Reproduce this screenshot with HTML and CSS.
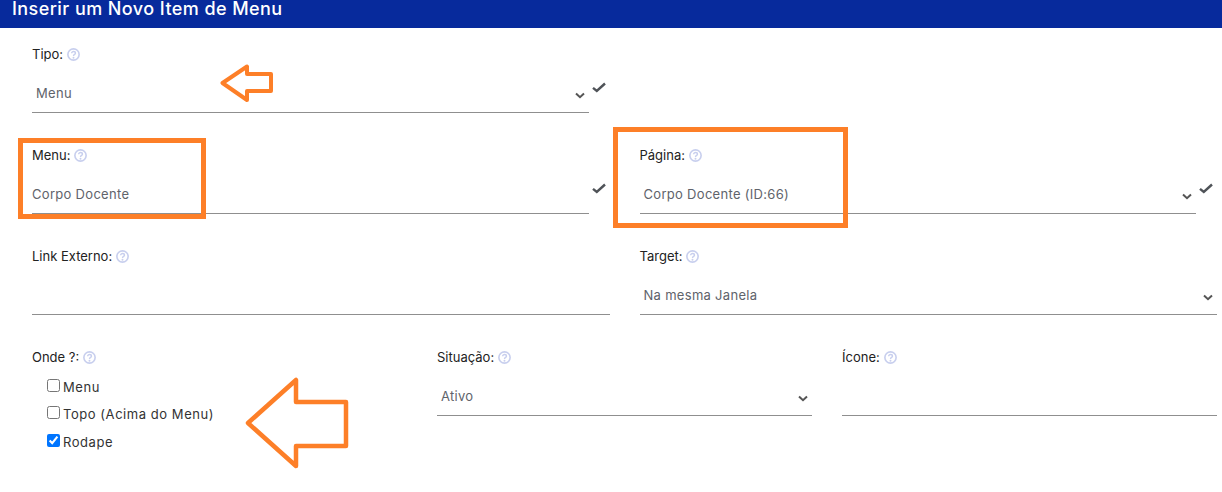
FILE: index.html
```html
<!DOCTYPE html>
<html lang="pt">
<head>
<meta charset="utf-8">
<title>Inserir um Novo Item de Menu</title>
<link rel="stylesheet" href="styles.css">
</head>
<body>
<svg class="defs" width="0" height="0" aria-hidden="true">
  <symbol id="help" viewBox="0 0 12 12">
    <circle cx="6" cy="6" r="5.2" fill="none" stroke="#c8cfee" stroke-width="1.5"/>
    <path d="M4.3 4.8C4.3 2.8 7.8 2.8 7.8 4.8C7.8 6 6 5.9 6 7.3" fill="none" stroke="#c8cfee" stroke-width="1.3"/>
    <circle cx="6" cy="9" r=".9" fill="#c8cfee"/>
  </symbol>
  <symbol id="chev" viewBox="0 0 10 7">
    <path d="M1 1.5L5 5.2L9 1.5" fill="none" stroke="#555" stroke-width="2"/>
  </symbol>
  <symbol id="check" viewBox="0 0 14 11">
    <path d="M1 5.8L4.8 9L13 1.5" fill="none" stroke="#4f5358" stroke-width="2.4"/>
  </symbol>
</svg>
<header class="title-bar"><h1>Inserir um Novo Item de Menu</h1></header>
<main class="form">
  <div class="row row-first">
    <div class="field">
      <div class="label">Tipo: <svg class="help"><use href="#help"/></svg></div>
      <div class="with-check">
        <div class="control control-select"><span class="value value-pad">Menu</span><svg class="chev"><use href="#chev"/></svg></div>
        <svg class="check"><use href="#check"/></svg>
      </div>
    </div>
  </div>
  <div class="row">
    <div class="field">
      <div class="label">Menu: <svg class="help"><use href="#help"/></svg></div>
      <div class="with-check">
        <div class="control"><span class="value">Corpo Docente</span></div>
        <svg class="check"><use href="#check"/></svg>
      </div>
    </div>
    <div class="field">
      <div class="label">Página: <svg class="help"><use href="#help"/></svg></div>
      <div class="with-check">
        <div class="control control-select"><span class="value value-pad">Corpo Docente (ID:66)</span><svg class="chev"><use href="#chev"/></svg></div>
        <svg class="check"><use href="#check"/></svg>
      </div>
    </div>
  </div>
  <div class="row">
    <div class="field">
      <div class="label">Link Externo: <svg class="help"><use href="#help"/></svg></div>
      <div class="control"></div>
    </div>
    <div class="field">
      <div class="label">Target: <svg class="help"><use href="#help"/></svg></div>
      <div class="control control-select"><span class="value value-pad">Na mesma Janela</span><svg class="chev"><use href="#chev"/></svg></div>
    </div>
  </div>
  <div class="row row-three">
    <div class="field">
      <div class="label">Onde ?: <svg class="help"><use href="#help"/></svg></div>
      <div class="checks">
        <label class="option"><input type="checkbox"> Menu</label>
        <label class="option"><input type="checkbox"> Topo (Acima do Menu)</label>
        <label class="option"><input type="checkbox" checked> Rodape</label>
      </div>
    </div>
    <div class="field">
      <div class="label">Situação: <svg class="help"><use href="#help"/></svg></div>
      <div class="control control-select"><span class="value value-pad">Ativo</span><svg class="chev"><use href="#chev"/></svg></div>
    </div>
    <div class="field">
      <div class="label">Ícone: <svg class="help"><use href="#help"/></svg></div>
      <div class="control"></div>
    </div>
  </div>
</main>
<div class="box box-menu"></div>
<div class="box box-page"></div>
<svg class="arrow arrow-small" viewBox="0 0 54 38"><path d="M2.5 19L27 2.5V10H51V27H27V36Z" fill="none" stroke="#fd7f28" stroke-width="4" stroke-linejoin="round"/></svg>
<svg class="arrow arrow-big" viewBox="0 0 104 96"><path d="M3 48L51 5V27H101V71H51V91Z" fill="none" stroke="#fd7f28" stroke-width="4.5" stroke-linejoin="round"/></svg>
</body>
</html>
```

FILE: styles.css
```css
* { box-sizing: border-box; }
html, body { margin: 0; padding: 0; }
body {
  width: 1222px;
  height: 492px;
  overflow: hidden;
  position: relative;
  background: #fff;
  font-family: "Inter", "Noto Sans", sans-serif;
  font-size: 13px;
  color: #222;
}
.defs { position: absolute; }
.title-bar {
  height: 28px;
  background: #072a9c;
  padding-left: 12px;
}
.title-bar h1 {
  margin: 0;
  font-size: 18px;
  line-height: 18px;
  font-weight: 500;
  color: #fff;
  letter-spacing: .43px;
}
.form { padding: 0 5px 0 32px; }
.row {
  display: grid;
  grid-template-columns: 1fr 1fr;
  column-gap: 30px;
  height: 101px;
}
.row-first { padding-top: 16px; height: 117px; }
.row-three { grid-template-columns: 1fr 1fr 1fr; }
.field { min-width: 0; }
.label {
  height: 20px;
  line-height: 20px;
  display: flex;
  align-items: center;
  gap: 4px;
}
.help { width: 13px; height: 13px; }
.with-check { display: flex; align-items: flex-start; }
.with-check .control { flex: 1 1 auto; }
.check { width: 14px; height: 11px; margin: 18px 4px 0 3px; flex: none; }
.control {
  height: 49px;
  border-bottom: 1px solid #8f8f8f;
  display: flex;
  align-items: center;
  justify-content: space-between;
  color: #60636b;
  letter-spacing: .3px;
  padding-top: 10px;
}
.value-pad { padding-left: 4px; }
.chev { width: 10px; height: 7px; margin: 4px 4px 0 0; flex: none; }
.checks { display: flex; flex-direction: column; padding: 6px 0 0 15px; }
.option {
  display: flex;
  align-items: center;
  height: 27.5px;
  letter-spacing: .55px;
  color: #333;
  gap: 3px;
}
.option input { margin: 0 0 3px 0; width: 13px; height: 13px; }
.box { position: absolute; border: 5px solid #fd7f28; }
.box-menu { left: 18px; top: 138px; width: 188px; height: 81px; }
.box-page { left: 613px; top: 127px; width: 235px; height: 101px; }
.arrow { position: absolute; }
.arrow-small { left: 220px; top: 64px; width: 54px; height: 38px; }
.arrow-big { left: 245px; top: 375px; width: 104px; height: 96px; }
```
